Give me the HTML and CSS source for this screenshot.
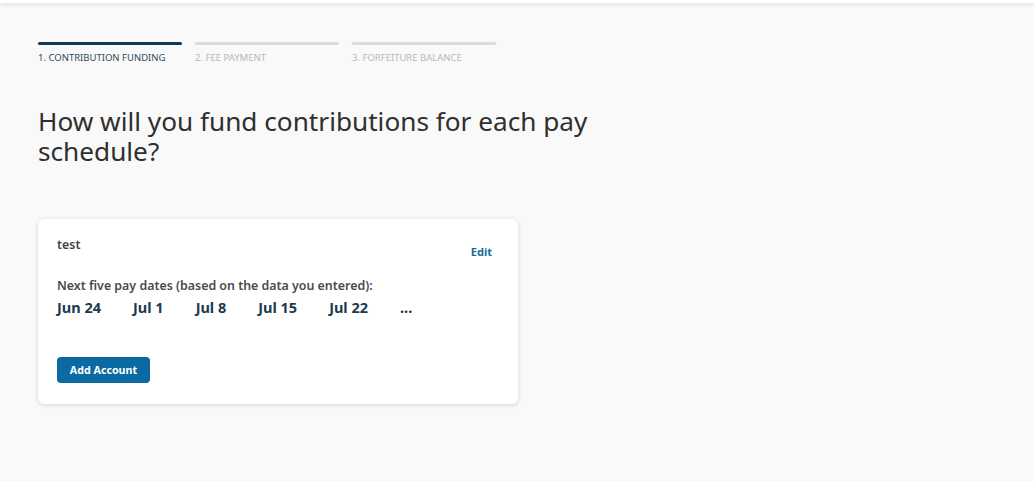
FILE: index.html
```html
<!DOCTYPE html>
<html lang="en">
<head>
<meta charset="utf-8">
<title>Contribution Funding</title>
<link rel="stylesheet" href="styles.css">
</head>
<body>
<header class="topbar"></header>
<main class="page">
  <nav class="stepper">
    <div class="step active"><div class="step-bar"></div><div class="step-label">1. Contribution Funding</div></div>
    <div class="step"><div class="step-bar"></div><div class="step-label">2. Fee Payment</div></div>
    <div class="step"><div class="step-bar"></div><div class="step-label">3. Forfeiture Balance</div></div>
  </nav>
  <h1 class="title">How will you fund contributions for each pay schedule?</h1>
  <section class="card">
    <div class="card-head">
      <div class="sched-name">test</div>
      <a class="edit" href="#">Edit</a>
    </div>
    <div class="dates-label">Next five pay dates (based on the data you entered):</div>
    <div class="dates">
      <span>Jun 24</span><span>Jul 1</span><span>Jul 8</span><span>Jul 15</span><span>Jul 22</span><span>...</span>
    </div>
    <button class="btn" type="button">Add Account</button>
  </section>
</main>
</body>
</html>
```
FILE: styles.css
```css
* { box-sizing: border-box; }
html, body { margin: 0; padding: 0; }
body {
  background: #f9f9f9;
  font-family: "Noto Sans", "Lato", sans-serif;
  color: #333;
  height: 481px;
  overflow: hidden;
}
.topbar {
  height: 3px;
  background: #fff;
  box-shadow: 0 1px 4px rgba(0,0,0,0.15);
}
.page {
  padding: 39px 38px 0;
}
.stepper {
  display: flex;
  gap: 13px;
}
.step { width: 144px; }
.step-bar {
  height: 3px;
  border-radius: 2px;
  background: #dcdcdc;
}
.step.active .step-bar { background: #0f3a52; }
.step-label {
  margin-top: 7px;
  font-size: 9.5px;
  line-height: 11px;
  text-transform: uppercase;
  color: #b8b8b8;
}
.step.active .step-label { color: #2f4a5a; }
.title {
  margin: 43px 0 0;
  width: 600px;
  font-size: 26.2px;
  line-height: 30px;
  font-weight: 400;
  color: #2f2f2f;
}
.card {
  margin-top: 53px;
  width: 480px;
  background: #fff;
  border-radius: 6px;
  box-shadow: 0 1px 4px rgba(0,0,0,0.15);
  padding: 18px 26px 21px 19px;
}
.card-head {
  display: flex;
  justify-content: space-between;
  align-items: flex-start;
  height: 22px;
}
.sched-name {
  font-size: 12.4px;
  line-height: 16px;
  font-weight: 600;
  color: #444;
}
.edit {
  margin-top: 8px;
  font-size: 11px;
  line-height: 14px;
  font-weight: 700;
  color: #1a6a9c;
  text-decoration: none;
}
.dates-label {
  margin-top: 19px;
  font-size: 12.4px;
  line-height: 16px;
  font-weight: 600;
  color: #4a4a4a;
}
.dates {
  display: flex;
  gap: 32px;
  margin-top: 3px;
  font-size: 14.5px;
  line-height: 20px;
  font-weight: 700;
  color: #1c3a4e;
}
.btn {
  display: block;
  margin-top: 40px;
  height: 26px;
  width: 93px;
  padding: 0;
  border: 0;
  border-radius: 4px;
  background: #0a6aa1;
  color: #fff;
  font-family: inherit;
  font-size: 10.7px;
  font-weight: 700;
}
```
